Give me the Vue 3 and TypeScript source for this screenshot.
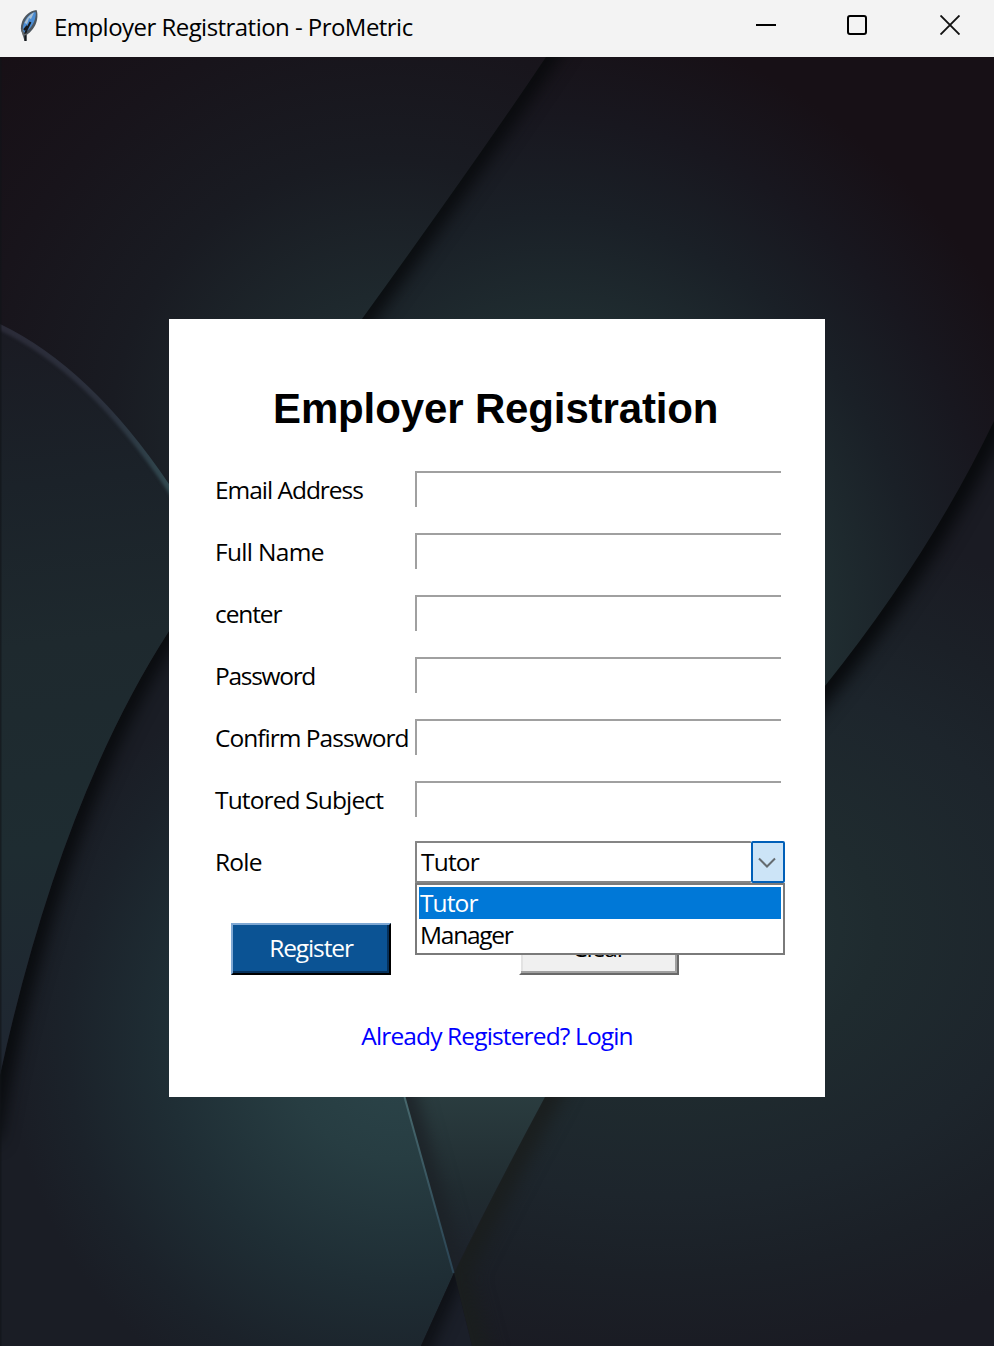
<script setup lang="ts">
import { ref } from 'vue'

interface Field {
  id: string
  label: string
  type: string
}

const fields: Field[] = [
  { id: 'email', label: 'Email Address', type: 'text' },
  { id: 'name', label: 'Full Name', type: 'text' },
  { id: 'center', label: 'center', type: 'text' },
  { id: 'password', label: 'Password', type: 'password' },
  { id: 'confirm', label: 'Confirm Password', type: 'password' },
  { id: 'subject', label: 'Tutored Subject', type: 'text' },
]
const roles = ['Tutor', 'Manager']
const role = ref('Tutor')
const open = ref(true)

function choose(value: string): void {
  role.value = value
  open.value = false
}
</script>

<template>
  <div class="window">
    <header class="titlebar">
      <svg class="feather" width="20" height="34" viewBox="0 0 20 34">
        <path d="M17.500 1 C11 1.500 5 7 3 13 C1.300 18 1.500 22 3.500 25 L5.500 32 L7.500 32 L7.500 26 C12 23 16.500 18 18 11 C18.800 7 18.500 3 17.500 1Z" fill="#4d565e" />
        <path d="M16.500 3 C11 4 7 9 5 14 C3.500 18 3.500 21 4.800 24 C9 22 14 17 16 10 C16.800 7 17 4.500 16.500 3Z" fill="#4a8cd3" />
        <path d="M15 3.500 C11 5 7.500 10 5.500 14 L8 15 L10 9 L12 10Z" fill="#a9bfd1" />
        <path d="M11.500 13 L8 20 L6.500 24 L6.500 32 M8.300 17 L5 21" fill="none" stroke="#14171b" stroke-width="2" />
        <path d="M3 20 L4.500 26 L8 25" fill="none" stroke="#62676b" stroke-width="1.500" />
      </svg>
      <h1 class="caption">Employer Registration - ProMetric</h1>
      <div class="controls">
        <svg width="20" height="20" viewBox="0 0 20 20"><path d="M0 10H20" stroke="#000" stroke-width="2" /></svg>
        <svg width="20" height="20" viewBox="0 0 20 20"><rect x="1" y="1" width="18" height="18" rx="2" fill="none" stroke="#000" stroke-width="2" /></svg>
        <svg width="20" height="20" viewBox="0 0 20 20"><path d="M.5 .5L19.500 19.500M19.500 .5L.5 19.500" stroke="#111" stroke-width="1.900" /></svg>
      </div>
    </header>

    <main class="content">
      <svg class="backdrop" width="994" height="1289" viewBox="0 57 994 1289" aria-hidden="true">
        <defs>
          <radialGradient id="g-tl" gradientUnits="userSpaceOnUse" cx="390" cy="440" r="560">
            <stop offset="0" stop-color="#26373b" /><stop offset=".26" stop-color="#1e282d" /><stop offset=".5" stop-color="#191b22" /><stop offset=".75" stop-color="#18141b" /><stop offset="1" stop-color="#170f15" />
          </radialGradient>
          <radialGradient id="g-tr" gradientUnits="userSpaceOnUse" cx="0" cy="0" r="1" gradientTransform="translate(590 600) rotate(-20) scale(500 600)">
            <stop offset="0" stop-color="#24383a" /><stop offset=".42" stop-color="#213033" /><stop offset=".65" stop-color="#1a2027" /><stop offset=".82" stop-color="#18171f" /><stop offset="1" stop-color="#171016" />
          </radialGradient>
          <radialGradient id="g-r" gradientUnits="userSpaceOnUse" cx="0" cy="0" r="1" gradientTransform="translate(660 930) scale(620 430)">
            <stop offset="0" stop-color="#25373a" /><stop offset=".35" stop-color="#1f2b2f" /><stop offset=".62" stop-color="#1d252c" /><stop offset=".8" stop-color="#1b2027" /><stop offset="1" stop-color="#1a1b23" />
          </radialGradient>
          <linearGradient id="g-arc" gradientUnits="userSpaceOnUse" x1="20" y1="340" x2="100" y2="1060">
            <stop offset="0" stop-color="#1a1b23" /><stop offset=".2" stop-color="#1b2229" /><stop offset=".42" stop-color="#1e292e" /><stop offset=".7" stop-color="#1e2c31" /><stop offset="1" stop-color="#1f2631" />
          </linearGradient>
          <radialGradient id="g-bl" gradientUnits="userSpaceOnUse" cx="0" cy="0" r="1" gradientTransform="translate(400 1040) rotate(12) scale(390 400)">
            <stop offset="0" stop-color="#2c464b" /><stop offset=".3" stop-color="#273d42" /><stop offset=".6" stop-color="#1f2e35" /><stop offset=".85" stop-color="#1b222a" /><stop offset="1" stop-color="#1a1d25" />
          </radialGradient>
          <linearGradient id="g-w" x1="0" y1="0" x2="0" y2="1">
            <stop offset="0" stop-color="#2a3c3f" /><stop offset=".55" stop-color="#202b30" /><stop offset="1" stop-color="#1d212b" />
          </linearGradient>
          <linearGradient id="g-rim" gradientUnits="userSpaceOnUse" x1="0" y1="324" x2="169" y2="484">
            <stop offset="0" stop-color="#2b2b38" /><stop offset=".6" stop-color="#2b313d" /><stop offset="1" stop-color="#31484f" />
          </linearGradient>
          <linearGradient id="g-edge" x1="0" y1="0" x2="0" y2="1">
            <stop offset="0" stop-color="#47686d" /><stop offset="1" stop-color="#2b4454" />
          </linearGradient>
          <filter id="soft" filterUnits="userSpaceOnUse" x="-60" y="0" width="1110" height="1420" color-interpolation-filters="sRGB"><feGaussianBlur stdDeviation="9" /></filter>
          <filter id="fine" filterUnits="userSpaceOnUse" x="-60" y="0" width="1110" height="1420" color-interpolation-filters="sRGB"><feGaussianBlur stdDeviation="1.500" /></filter>
          <clipPath id="c-tr"><path d="M546 57 Q482 153 362 319 V700 H825 Q930 555 994 421 V57Z" /></clipPath>
          <clipPath id="c-r"><path d="M994 421 Q930 555 825 686 L545 1097 Q495 1190 454 1273 L472 1346 H994Z" /></clipPath>
          <clipPath id="c-bl"><path d="M169 631 Q60 800 0 1075 V1346 H421 L454 1273 L405 1097 V600Z" /></clipPath>
          <clipPath id="c-arc"><path d="M0 324 Q90 367 169 484 V631 Q60 800 0 1075Z" /></clipPath>
          <clipPath id="c-w"><path d="M405 1097 H545 Q495 1190 454 1273Z" /></clipPath>
          <clipPath id="c-sh"><path d="M454 1273 L421 1346 H472Z" /></clipPath>
        </defs>
        <rect y="57" width="994" height="1289" fill="url(#g-tl)" />
        <g clip-path="url(#c-tr)">
          <rect y="57" width="994" height="700" fill="url(#g-tr)" />
          <path d="M573 15 L546 57 Q482 153 362 319 L335 355" fill="none" stroke="#07090b" stroke-width="20" filter="url(#soft)" />
        </g>
        <g clip-path="url(#c-r)">
          <rect y="400" width="994" height="946" fill="url(#g-r)" />
          <path d="M1016 376 L994 421 Q930 555 825 686 L780 742" fill="none" stroke="#06080a" stroke-width="24" filter="url(#soft)" />
          <path d="M575 1037 L545 1097 Q495 1190 454 1273 L485 1390" fill="none" stroke="#1a1e1e" stroke-width="30" filter="url(#soft)" />
        </g>
        <g clip-path="url(#c-bl)">
          <rect y="600" width="500" height="746" fill="url(#g-bl)" />
          <path d="M200 585 L169 631 Q60 800 0 1075 L-12 1140" fill="none" stroke="#06080a" stroke-width="20" filter="url(#soft)" />
        </g>
        <g clip-path="url(#c-arc)">
          <rect y="300" width="180" height="800" fill="url(#g-arc)" />
          <path d="M-10 321 L0 326 Q90 369 169 486 L180 504" fill="none" stroke="url(#g-rim)" stroke-width="8" filter="url(#fine)" />
        </g>
        <g clip-path="url(#c-w)">
          <rect x="400" y="1097" width="150" height="176" fill="url(#g-w)" />
          <path d="M397 1067 L454 1273" stroke="#1c2126" stroke-width="20" filter="url(#soft)" />
        </g>
        <g clip-path="url(#c-sh)">
          <rect x="415" y="1270" width="60" height="76" fill="#1b1f29" />
          <path d="M467 1244 L403 1386" stroke="#07090b" stroke-width="14" filter="url(#soft)" />
        </g>
        <path d="M404.500 1097 L453.500 1273" stroke="url(#g-edge)" stroke-width="2" />
        <path d="M.5 57V1346" stroke="#111418" stroke-width="2" opacity=".6" />
      </svg>

      <form class="card" @submit.prevent>
        <h2 class="heading">Employer Registration</h2>
        <div v-for="f in fields" :key="f.id" class="row">
          <label :for="f.id" :class="['label', `label-${f.id}`]">{{ f.label }}</label>
          <input :id="f.id" class="entry" :type="f.type" autocomplete="off" />
        </div>
        <div class="row">
          <span class="label">Role</span>
          <div class="combo">
            <div class="value" @click="open = !open">{{ role }}</div>
            <button type="button" class="arrow" aria-label="Open" @click="open = !open">
              <svg width="18" height="12" viewBox="0 0 18 12"><path d="M1 1.500L9 9.500L17 1.500" fill="none" stroke="#646b70" stroke-width="2" /></svg>
            </button>
            <ul v-if="open" class="options">
              <li
                v-for="r in roles"
                :key="r"
                :class="['option', `option-${r.toLowerCase()}`, { selected: r === role }]"
                @click="choose(r)"
              >
                {{ r }}
              </li>
            </ul>
          </div>
        </div>
        <div class="actions">
          <button class="button primary" type="submit">Register</button>
          <button class="button" type="reset">Clear</button>
        </div>
        <a class="login">Already Registered? Login</a>
      </form>
    </main>
  </div>
</template>

<style>
html,
body {
  margin: 0;
  background: #17151b;
  overflow: hidden;
}
</style>

<style scoped>
.window {
  width: 994px;
  height: 1346px;
  display: flex;
  flex-direction: column;
  overflow: hidden;
  font-family: "Open Sans", "Noto Sans", sans-serif;
  color: #000;
}
.titlebar {
  box-sizing: border-box;
  height: 57px;
  flex: none;
  display: flex;
  align-items: flex-start;
  padding: 9px 34px 0 19px;
  background: #f3f3f3;
}
.feather {
  flex: none;
}
.caption {
  margin: 1px 0 0 15px;
  font-size: 24px;
  line-height: 34px;
  font-weight: 400;
  letter-spacing: -0.54px;
  white-space: nowrap;
}
.controls {
  display: flex;
  gap: 71px;
  margin: 6px 0 0 auto;
}
.controls svg {
  display: block;
}
.controls svg:nth-child(2) {
  margin-right: 2px;
}
.content {
  position: relative;
  flex: 1;
  display: flex;
  justify-content: center;
  align-items: flex-start;
}
.backdrop {
  position: absolute;
  inset: 0;
}
.card {
  position: relative;
  box-sizing: border-box;
  width: 656px;
  height: 778px;
  margin-top: 262px;
  padding: 60px 40px 0 46px;
  background: #fff;
  font-size: 24.5px;
}
.heading {
  margin: 0 0 32px 58px;
  font: 700 42px/60px "Liberation Sans", Arial, sans-serif;
  letter-spacing: -0.13px;
  white-space: nowrap;
}
.row {
  display: flex;
  height: 62px;
}
.label {
  width: 200px;
  flex: none;
  line-height: 38px;
  letter-spacing: -0.8px;
  white-space: nowrap;
}
.label-email {
  letter-spacing: -1.03px;
}
.label-name {
  letter-spacing: -0.68px;
}
.label-center {
  letter-spacing: -1.1px;
}
.label-password {
  letter-spacing: -1.3px;
}
.label-confirm {
  letter-spacing: -0.98px;
}
.label-subject {
  letter-spacing: -0.86px;
}
.entry {
  box-sizing: border-box;
  width: 366px;
  height: 36px;
  padding: 0 4px;
  border: 0 solid #a0a0a0;
  border-width: 2px 0 0 2px;
  outline: none;
  background: #fff;
  font: inherit;
}
.combo {
  position: relative;
  box-sizing: border-box;
  display: flex;
  width: 370px;
  height: 42px;
  margin-top: -2px;
}
.value {
  box-sizing: border-box;
  flex: 1;
  border: 2px solid #858585;
  border-right: 0;
  border-radius: 1px;
  padding-left: 4px;
  line-height: 38px;
  letter-spacing: -0.8px;
}
.arrow {
  box-sizing: border-box;
  width: 34px;
  padding: 2px 2px 0 0;
  border: 2px solid #005fb8;
  border-radius: 2px;
  background: #cce4f7;
  display: flex;
  align-items: center;
  justify-content: center;
}
.options {
  position: absolute;
  z-index: 2;
  top: 42px;
  left: 0;
  box-sizing: border-box;
  width: 370px;
  height: 72px;
  margin: 0;
  padding: 2px;
  border: 2px solid #7a7a7a;
  background: #fff;
  list-style: none;
}
.option {
  height: 32px;
  line-height: 31px;
  padding-left: 1px;
  letter-spacing: -0.9px;
}
.option-manager {
  letter-spacing: -1.25px;
}
.selected {
  background: #0078d7;
  color: #fff;
}
.actions {
  display: flex;
  gap: 128px;
  margin: 18px 0 0 16px;
}
.button {
  box-sizing: border-box;
  width: 160px;
  height: 52px;
  padding: 0 0 3px;
  border: 2px solid;
  border-color: #e3e3e3 #696969 #696969 #fff;
  box-shadow: inset -2px -2px #a0a0a0, inset 2px 2px #e3e3e3;
  background: #f0f0f0;
  font: inherit;
  letter-spacing: -1.1px;
}
.primary {
  border-color: #7fa8d4 #000 #000 #7fa8d4;
  box-shadow: inset -2px -2px #06305a;
  background: #0b5394;
  color: #fff;
}
.login {
  display: block;
  margin: 42px 6px 0 0;
  line-height: 38px;
  text-align: center;
  color: #00f;
  letter-spacing: -0.86px;
}
</style>
